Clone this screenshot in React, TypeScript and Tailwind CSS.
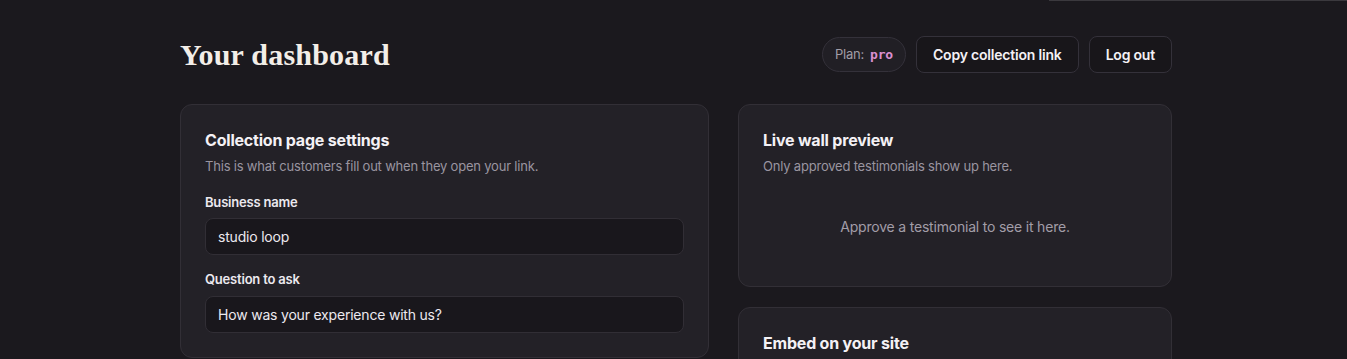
import React from "react"

const sans = { fontFamily: "Inter, 'Noto Sans', sans-serif" }

function Field({ label, value, first }: { label: string; value: string; first?: boolean }) {
  return (
    <div className={first ? "" : "mt-[14px]"}>
      <label className="block text-[13px] font-semibold leading-5 text-[#ece9ef]">{label}</label>
      <div
        className={
          (first ? "mt-1.5" : "mt-[7px]") +
          " flex h-[37px] items-center rounded-lg border border-[#312e35] bg-[#19171c] px-3 text-[14px] text-[#ece9ef]"
        }
      >
        {value}
      </div>
    </div>
  )
}

export default function App() {
  return (
    <div className="relative min-h-[359px] bg-[#1b191e] tracking-[-0.2px]" style={sans}>
      <div className="absolute right-0 top-0 h-px w-[298px] bg-[#3b393e]" />
      <div className="ml-[180px] w-[992px] pt-9">
        <header className="flex items-center justify-between">
          <h1
            className="text-[30px] font-bold leading-9 tracking-[0.2px] text-[#f3eee8]"
            style={{ fontFamily: "'Liberation Serif', serif" }}
          >
            Your dashboard
          </h1>
          <div className="flex items-center gap-[10px]">
            <span className="flex h-[35px] items-center gap-1.5 rounded-full border border-[#34313a] bg-[#211f25] px-3 text-[13px] text-[#a29da7]">
              Plan:
              <span
                className="text-[13px] font-bold text-[#d98fd0]"
                style={{ fontFamily: "'DejaVu Sans Mono', monospace" }}
              >
                pro
              </span>
            </span>
            <button className="h-[37px] rounded-lg border border-[#34313a] bg-[#18161a] px-4 text-[14px] font-semibold text-[#f4f1f5]">
              Copy collection link
            </button>
            <button className="h-[37px] rounded-lg border border-[#34313a] bg-[#18161a] px-4 text-[14px] font-semibold text-[#f4f1f5]">
              Log out
            </button>
          </div>
        </header>

        <div className="mt-[31px] grid grid-cols-[529px_434px] items-start gap-[29px]">
          <section className="rounded-xl border border-[#322f36] bg-[#232127] px-6 pb-6 pt-[23px]">
            <h2 className="text-[16px] font-bold leading-6 text-[#f4f1f5]">Collection page settings</h2>
            <p className="mt-1 text-[13px] leading-5 text-[#9a95a0]">
              This is what customers fill out when they open your link.
            </p>
            <div className="mt-4">
              <Field first label="Business name" value="studio loop" />
              <Field label="Question to ask" value="How was your experience with us?" />
            </div>
          </section>

          <div className="flex flex-col gap-5">
            <section className="h-[183px] rounded-xl border border-[#322f36] bg-[#232127] px-6 pt-[23px]">
              <h2 className="text-[16px] font-bold leading-6 text-[#f4f1f5]">Live wall preview</h2>
              <p className="mt-1 text-[13px] leading-5 text-[#9a95a0]">Only approved testimonials show up here.</p>
              <p className="mt-[41px] text-center text-[14px] leading-5 text-[#a29da7]">
                Approve a testimonial to see it here.
              </p>
            </section>
            <section className="h-[120px] rounded-xl border border-[#322f36] bg-[#232127] px-6 pt-[23px]">
              <h2 className="text-[16px] font-bold leading-6 text-[#f4f1f5]">Embed on your site</h2>
            </section>
          </div>
        </div>
      </div>
    </div>
  )
}
